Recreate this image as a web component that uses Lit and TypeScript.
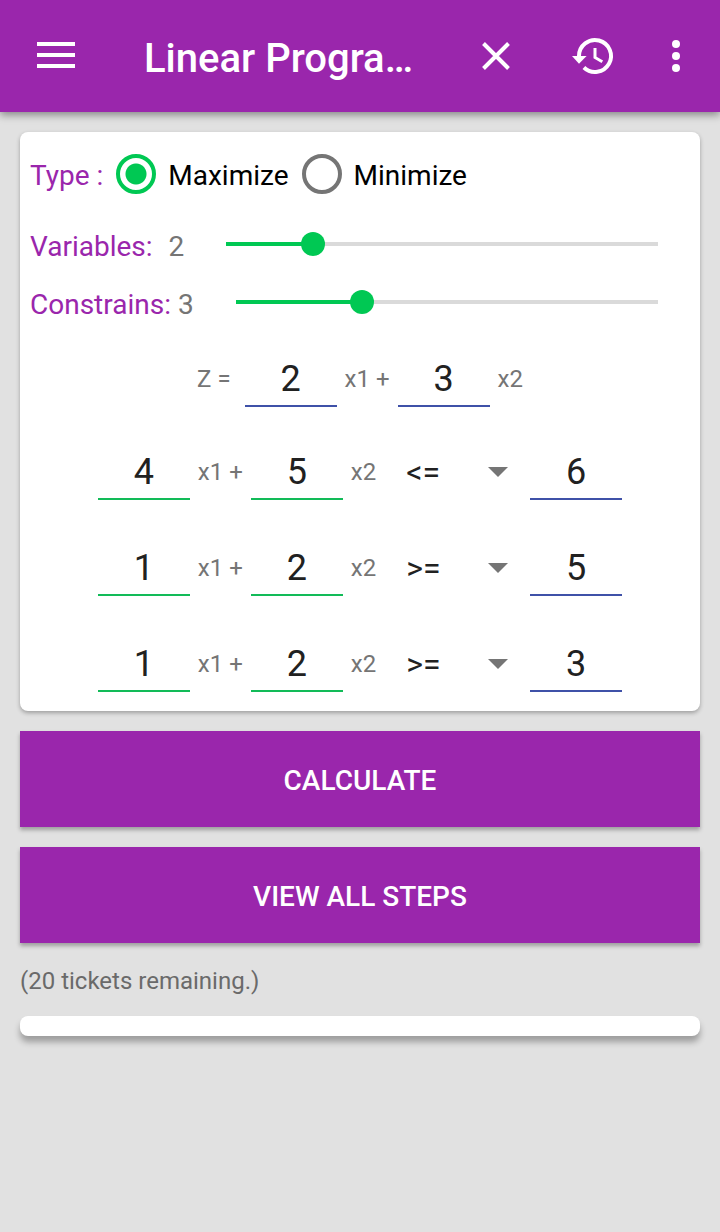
import { LitElement, html, css } from "lit";
import { customElement, property, state } from "lit/decorators.js";
import { styleMap } from "lit/directives/style-map.js";

interface Constraint {
  coefficients: number[];
  relation: string;
  bound: number;
}

@customElement("app-bar")
class AppBar extends LitElement {
  @property() heading = "";

  static styles = css`
    :host {
      display: block;
      position: relative;
      z-index: 1;
      background: #9a26ac;
      color: #fff;
      box-shadow: 0 3px 8px rgba(0, 0, 0, 0.4);
    }
    .bar {
      display: flex;
      align-items: center;
      height: 112px;
    }
    .button {
      display: grid;
      place-items: center;
      width: 98px;
      height: 96px;
      padding: 0;
      border: 0;
      background: none;
      color: inherit;
    }
    .menu {
      width: 112px;
    }
    .more {
      width: 68px;
      margin-right: 10px;
    }
    .title {
      flex: 1;
      min-width: 0;
      margin: 0 0 0 32px;
      overflow: hidden;
      white-space: nowrap;
      font-size: 40px;
      line-height: 48px;
      font-weight: 500;
      padding-top: 6px;
    }
    svg {
      display: block;
    }
  `;

  render() {
    return html`
      <header class="bar">
        <button class="button menu" aria-label="Menu">
          <svg width="48" height="48" viewBox="0 0 48 48" fill="none" stroke="currentColor" stroke-width="4">
            <path d="M5 12H43M5 23H43M5 34H43" />
          </svg>
        </button>
        <h1 class="title">${this.heading}</h1>
        <button class="button" aria-label="Clear">
          <svg width="48" height="48" viewBox="0 0 48 48" fill="none" stroke="currentColor" stroke-width="4">
            <path d="M12.5 11.5L37.5 36.5M37.5 11.5L12.5 36.5" />
          </svg>
        </button>
        <button class="button" aria-label="History">
          <svg width="48" height="48" viewBox="0 0 48 48">
            <g fill="none" stroke="currentColor">
              <path stroke-width="4" d="M10 25V24A16 16 0 1 1 14.9 35.5" />
              <path stroke-width="3" d="M26 16V25.5L33.3 29.8" />
            </g>
            <path fill="currentColor" d="M3 24H17.6L10 31.7Z" />
          </svg>
        </button>
        <button class="button more" aria-label="More options">
          <svg width="48" height="48" viewBox="0 0 48 48" fill="currentColor">
            <circle cx="24" cy="12" r="4" />
            <circle cx="24" cy="24" r="4" />
            <circle cx="24" cy="36" r="4" />
          </svg>
        </button>
      </header>
    `;
  }
}

@customElement("count-slider")
class CountSlider extends LitElement {
  @property() label = "";
  @property() spacing = "narrow";
  @property({ type: Number }) value = 0;

  static styles = css`
    :host {
      display: block;
    }
    .row {
      display: flex;
      align-items: center;
      height: 58px;
      font-size: 28px;
      line-height: 32px;
    }
    .label {
      color: #9a26ac;
      padding-top: 6px;
    }
    .value {
      color: #757575;
      padding-top: 6px;
      margin-right: 30px;
    }
    .wide {
      margin-left: 16px;
    }
    .narrow {
      margin-left: 7px;
    }
    .range {
      flex: 1;
      min-width: 0;
      height: 24px;
      margin: 0 20px 0 0;
      appearance: none;
      background-color: transparent;
      background-image: linear-gradient(#00c853, #00c853), linear-gradient(#dadada, #dadada);
      background-repeat: no-repeat;
      background-position: 12px center, 12px center;
      background-size: calc((100% - 24px) * var(--filled)) 4px, calc(100% - 24px) 4px;
    }
    .range::-webkit-slider-thumb {
      appearance: none;
      width: 24px;
      height: 24px;
      border-radius: 50%;
      background: #00c853;
    }
  `;

  render() {
    return html`
      <div class="row">
        <label class="label" for="range">${this.label}</label>
        <span class="value ${this.spacing}">${this.value}</span>
        <input
          class="range"
          id="range"
          type="range"
          min="0"
          max="10"
          .value=${String(this.value)}
          style=${styleMap({ "--filled": String(this.value / 10) })}
          @input=${(e: Event) => (this.value = Number((e.target as HTMLInputElement).value))}
        />
      </div>
    `;
  }
}

@customElement("app-root")
class AppRoot extends LitElement {
  @state() private objective = [2, 3];
  @state() private constraints: Constraint[] = [
    { coefficients: [4, 5], relation: "<=", bound: 6 },
    { coefficients: [1, 2], relation: ">=", bound: 5 },
    { coefficients: [1, 2], relation: ">=", bound: 3 },
  ];

  static styles = css`
    :host {
      display: block;
      min-height: 100vh;
      background: #e1e1e1;
      font-family: Roboto, "Noto Sans", sans-serif;
    }
    input,
    select,
    button {
      font-family: inherit;
    }
    .page {
      display: flex;
      flex-direction: column;
      gap: 20px;
      padding: 20px;
    }
    .card {
      padding: 10px;
      border-radius: 8px;
      background: #fff;
      box-shadow: 0 2px 4px rgba(0, 0, 0, 0.3);
    }
    .type {
      display: flex;
      align-items: center;
      height: 64px;
      margin: 0 0 9px;
      font-size: 28px;
      line-height: 32px;
    }
    .type-label {
      color: #9a26ac;
      margin-right: 13px;
      padding-top: 4px;
    }
    .option {
      display: flex;
      align-items: center;
      gap: 12px;
      margin-right: 13px;
      color: #000;
    }
    .option-text {
      padding-top: 4px;
    }
    .radio {
      appearance: none;
      width: 40px;
      height: 40px;
      margin: 0;
      border: 4px solid #757575;
      border-radius: 50%;
    }
    .radio:checked {
      border-color: #00c853;
      background: radial-gradient(circle, #00c853 10px, transparent 11px);
    }
    .equation {
      display: flex;
      justify-content: center;
      align-items: flex-end;
      box-sizing: border-box;
      height: 96px;
      padding-bottom: 9px;
      gap: 8px;
      font-size: 24px;
      line-height: 56px;
      color: #757575;
    }
    .objective {
      height: 82px;
      padding-bottom: 6px;
    }
    .lead {
      margin-right: 6px;
    }
    .number {
      box-sizing: border-box;
      width: 92px;
      height: 56px;
      padding: 2px 0 0;
      border: 0;
      border-bottom: 2px solid #3f51a8;
      border-radius: 0;
      background: none;
      text-align: center;
      font-size: 36px;
      color: #212121;
      outline: 0;
    }
    .coefficient {
      border-bottom-color: #12bb58;
    }
    .relation {
      display: grid;
      grid-template-columns: 1fr 20px;
      align-items: center;
      width: 138px;
      padding-right: 14px;
      box-sizing: border-box;
    }
    .select {
      grid-area: 1 / 1 / 2 / 3;
      height: 56px;
      padding: 0 0 0 22px;
      border: 0;
      appearance: none;
      background: none;
      font-size: 32px;
      color: #212121;
    }
    .arrow {
      grid-area: 1 / 2;
      display: block;
      pointer-events: none;
    }
    .action {
      height: 96px;
      padding: 4px 0 0;
      border: 0;
      background: #9a26ac;
      color: #fff;
      font-size: 28px;
      line-height: 32px;
      font-weight: 500;
      box-shadow: 0 3px 4px rgba(0, 0, 0, 0.3);
    }
    .tickets {
      margin: 0;
      padding-top: 3px;
      font-size: 24px;
      line-height: 30px;
      color: #6a6a6a;
    }
    .result {
      box-shadow: 0 6px 6px rgba(0, 0, 0, 0.3);
    }
  `;

  private renderNumber(value: number, label: string, kind = "") {
    return html`<input class="number ${kind}" type="text" inputmode="decimal" aria-label=${label} .value=${String(value)} />`;
  }

  private renderTerms(values: number[], owner: string, kind = "") {
    return values.map(
      (value, i) => html`
        ${this.renderNumber(value, `${owner} x${i + 1}`, kind)}
        <span>x${i + 1}${i < values.length - 1 ? " +" : ""}</span>
      `
    );
  }

  private renderConstraint(row: Constraint, index: number) {
    const name = `Constraint ${index + 1}`;
    return html`
      <div class="equation">
        ${this.renderTerms(row.coefficients, name, "coefficient")}
        <div class="relation">
          <select class="select" aria-label="${name} relation">
            ${["<=", ">=", "="].map((r) => html`<option ?selected=${r === row.relation}>${r}</option>`)}
          </select>
          <svg class="arrow" width="20" height="10" viewBox="0 0 20 10" fill="#757575">
            <path d="M0 0H20L10 10Z" />
          </svg>
        </div>
        ${this.renderNumber(row.bound, `${name} bound`)}
      </div>
    `;
  }

  render() {
    return html`
      <app-bar heading="Linear Progra…"></app-bar>
      <main class="page">
        <section class="card">
          <div class="type" role="radiogroup" aria-labelledby="type">
            <span class="type-label" id="type">Type :</span>
            <label class="option">
              <input class="radio" type="radio" name="type" checked />
              <span class="option-text">Maximize</span>
            </label>
            <label class="option">
              <input class="radio" type="radio" name="type" />
              <span class="option-text">Minimize</span>
            </label>
          </div>
          <count-slider label="Variables:" spacing="wide" value="2"></count-slider>
          <count-slider label="Constrains:" value="3"></count-slider>
          <div class="equation objective">
            <span class="lead">Z =</span>
            ${this.renderTerms(this.objective, "Objective")}
          </div>
          ${this.constraints.map((row, i) => this.renderConstraint(row, i))}
        </section>
        <button class="action">CALCULATE</button>
        <button class="action">VIEW ALL STEPS</button>
        <p class="tickets">(20 tickets remaining.)</p>
        <section class="card result" aria-label="Result"></section>
      </main>
    `;
  }
}
